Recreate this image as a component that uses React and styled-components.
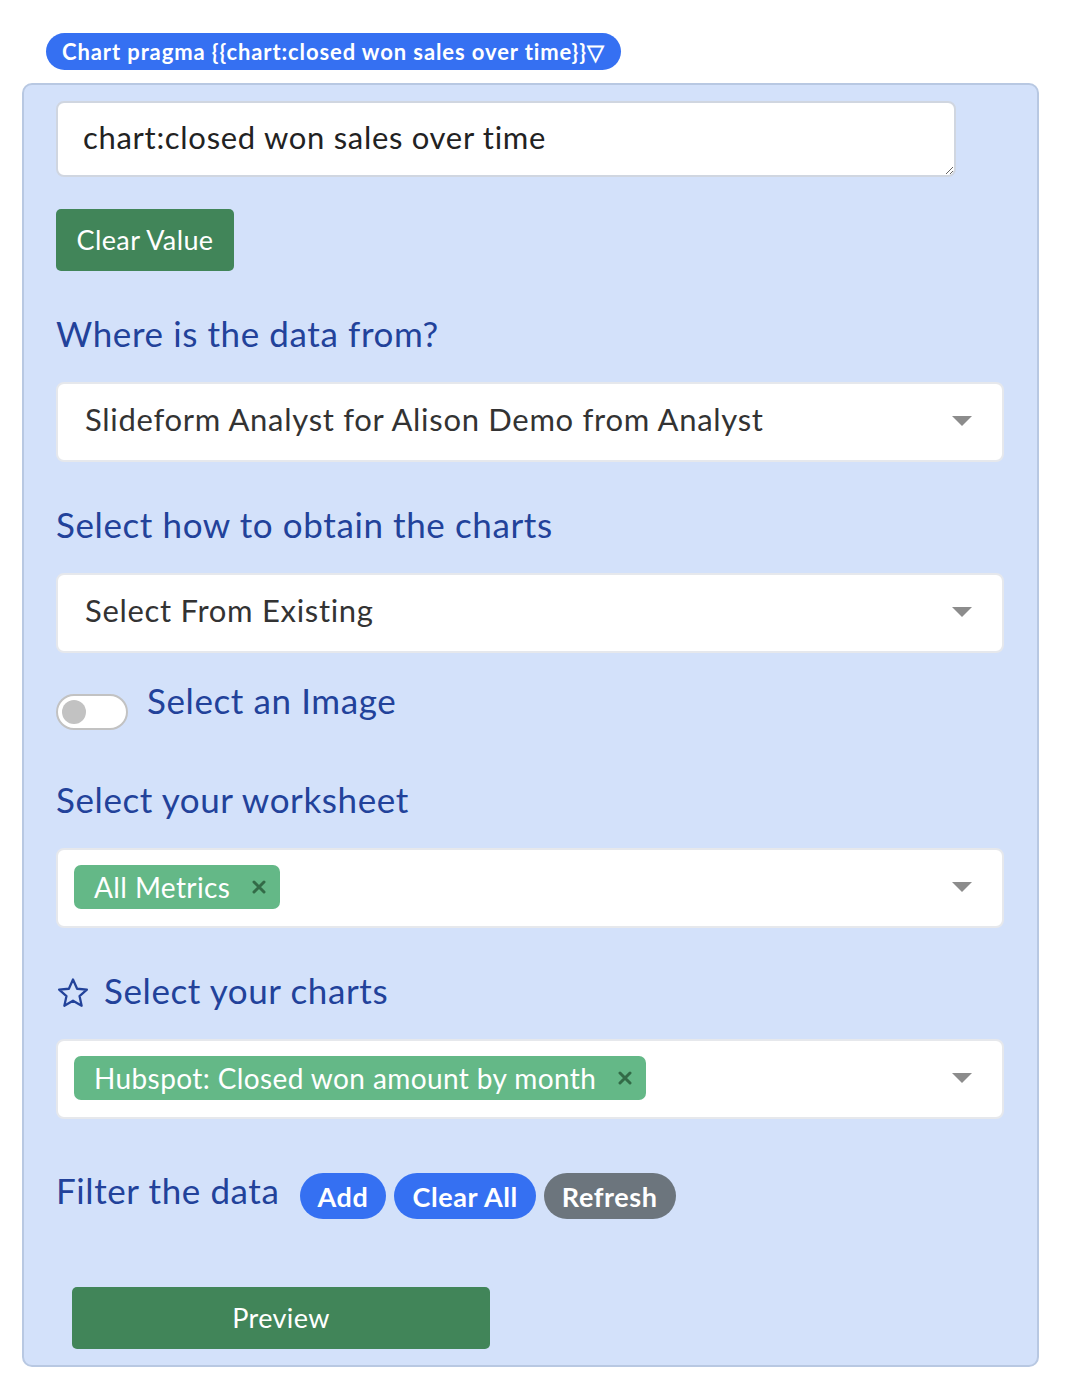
import styled, { createGlobalStyle } from 'styled-components';

const GlobalStyle = createGlobalStyle`
  body {
    margin: 0;
    background: white;
    font-family: Lato, "Noto Sans", sans-serif;
  }
`;

const Page = styled.div`
  padding: 33px 27px 20px 22px;
  width: 1017px;
`;

const Pragma = styled.div`
  display: inline-flex;
  align-items: center;
  height: 37px;
  margin-left: 24px;
  margin-bottom: 13px;
  padding: 0 16px;
  border-radius: 19px;
  background: #3570f2;
  color: white;
  font-size: 22px;
  font-weight: 700;
  letter-spacing: 0.9px;
`;

const Panel = styled.div`
  box-sizing: border-box;
  background: #d3e1fa;
  border: 2px solid #b8c8e2;
  border-radius: 10px;
  padding: 16px 32px 16px 32px;
  min-height: 1283px;
`;

const TextArea = styled.textarea`
  display: block;
  box-sizing: border-box;
  width: 900px;
  height: 76px;
  padding: 15px 25px;
  border: 2px solid #d0d6e0;
  border-radius: 8px;
  font-family: Lato, "Noto Sans", sans-serif;
  font-size: 31px;
  letter-spacing: 0.7px;
  color: #222;
  resize: vertical;
  outline: none;
`;

const GreenButton = styled.button`
  display: flex;
  align-items: center;
  justify-content: center;
  height: 62px;
  width: ${(p) => p.$width}px;
  margin-left: ${(p) => p.$indent || 0}px;
  padding-bottom: 2px;
  border: none;
  border-radius: 5px;
  background: #418559;
  color: white;
  font-family: Lato, "Noto Sans", sans-serif;
  font-size: 27px;
  letter-spacing: 0.4px;
`;

const Section = styled.div`
  margin-top: ${(p) => p.$top}px;
`;

const Heading = styled.div`
  display: flex;
  align-items: center;
  gap: 14px;
  padding-bottom: 4px;
  color: #22429a;
  font-size: 35px;
  line-height: 40px;
  letter-spacing: 0.6px;
`;

const SelectBox = styled.div`
  box-sizing: border-box;
  display: flex;
  align-items: center;
  justify-content: space-between;
  width: 948px;
  height: 80px;
  margin-top: 25px;
  padding: 0 30px 3px ${(p) => (p.$chips ? 16 : 27)}px;
  background: white;
  border: 2px solid #e6e8ec;
  border-radius: 8px;
  color: #333;
  font-size: 31px;
  letter-spacing: 0.7px;
`;

const Value = styled.span`
  margin-bottom: 4px;
`;

const Caret = styled.div`
  width: 0;
  height: 0;
  border-left: 10px solid transparent;
  border-right: 10px solid transparent;
  border-top: 10px solid #8c8c8c;
`;

const Chip = styled.div`
  display: flex;
  align-items: center;
  height: 44px;
  padding: 0 14px 0 20px;
  gap: 22px;
  background: #64b887;
  border-radius: 7px;
  color: white;
  font-size: 28px;
  letter-spacing: 0.4px;
`;

const ToggleRow = styled.div`
  display: flex;
  align-items: flex-start;
  gap: 19px;
  margin-top: 27px;
`;

const Toggle = styled.div`
  box-sizing: border-box;
  width: 72px;
  height: 36px;
  margin-top: 14px;
  border: 2px solid #c2c2c2;
  border-radius: 18px;
  background: white;
  padding: 4px;

  &::after {
    content: '';
    display: block;
    width: 24px;
    height: 24px;
    border-radius: 50%;
    background: #c2c2c2;
  }
`;

const FilterRow = styled.div`
  display: flex;
  align-items: center;
  gap: 8px;
  margin-top: 54px;

  & > ${Heading} {
    margin-right: 12px;
    margin-top: -8px;
  }
`;

const PillButton = styled.button`
  height: 46px;
  padding: 0 18px;
  border: none;
  border-radius: 23px;
  background: ${(p) => (p.$grey ? '#6c757d' : '#3570f2')};
  color: white;
  font-family: Lato, "Noto Sans", sans-serif;
  font-size: 27px;
  font-weight: 700;
  letter-spacing: 0.6px;
`;

const Footer = styled.div`
  margin-top: 68px;
`;

const Star = () => (
  <svg width="34" height="34" viewBox="0 0 24 24" fill="none" stroke="#22429a" strokeWidth="1.6" strokeLinejoin="round" style={{ marginTop: 6 }}>
    <polygon points="12,2.5 14.9,9 21.8,9.6 16.6,14.2 18.1,21 12,17.4 5.9,21 7.4,14.2 2.2,9.6 9.1,9" />
  </svg>
);

const CloseX = () => (
  <svg width="14" height="14" viewBox="0 0 14 14" stroke="#336b47" strokeWidth="3" strokeLinecap="round">
    <path d="M2 2 L12 12 M12 2 L2 12" />
  </svg>
);

const App = () => {
  return (
    <Page>
      <GlobalStyle />
      <Pragma>Chart pragma {'{{chart:closed won sales over time}}'}▽</Pragma>
      <Panel>
        <TextArea defaultValue="chart:closed won sales over time" />
        <Section $top={32}>
          <GreenButton $width={178}>Clear Value</GreenButton>
        </Section>

        <Section $top={42}>
          <Heading>Where is the data from?</Heading>
          <SelectBox>
            <Value>Slideform Analyst for Alison Demo from Analyst</Value>
            <Caret />
          </SelectBox>
        </Section>

        <Section $top={42}>
          <Heading>Select how to obtain the charts</Heading>
          <SelectBox>
            <Value>Select From Existing</Value>
            <Caret />
          </SelectBox>
        </Section>

        <ToggleRow>
          <Toggle />
          <Heading>Select an Image</Heading>
        </ToggleRow>

        <Section $top={49}>
          <Heading>Select your worksheet</Heading>
          <SelectBox $chips>
            <Chip>
              All Metrics <CloseX />
            </Chip>
            <Caret />
          </SelectBox>
        </Section>

        <Section $top={42}>
          <Heading>
            <Star />
            Select your charts
          </Heading>
          <SelectBox $chips>
            <Chip>
              Hubspot: Closed won amount by month <CloseX />
            </Chip>
            <Caret />
          </SelectBox>
        </Section>

        <FilterRow>
          <Heading>Filter the data</Heading>
          <PillButton>Add</PillButton>
          <PillButton>Clear All</PillButton>
          <PillButton $grey>Refresh</PillButton>
        </FilterRow>

        <Footer>
          <GreenButton $width={418} $indent={16}>Preview</GreenButton>
        </Footer>
      </Panel>
    </Page>
  );
};

export default App;
